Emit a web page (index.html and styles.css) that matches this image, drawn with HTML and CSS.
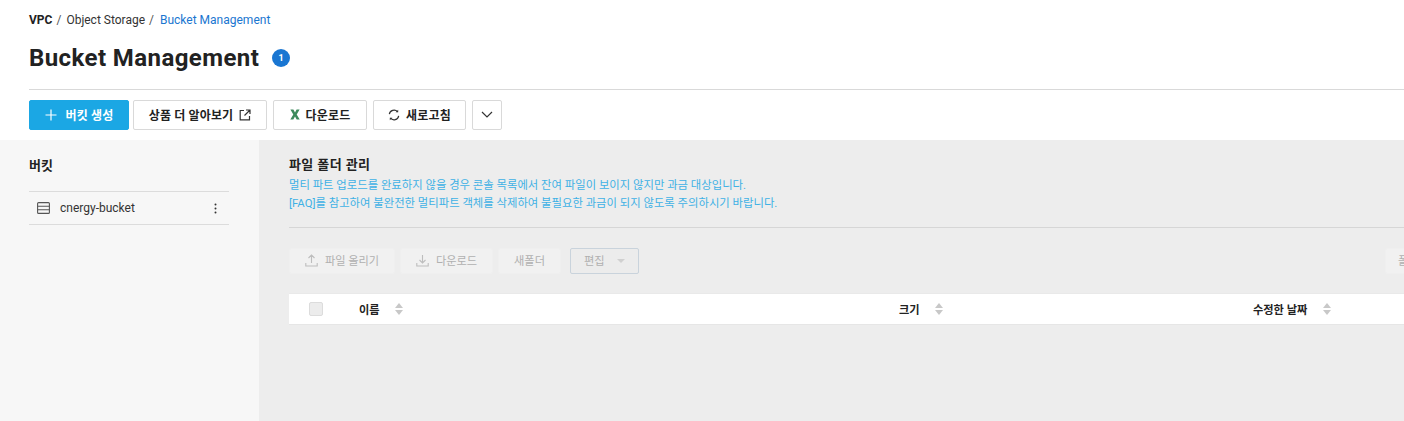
FILE: index.html
```html
<!DOCTYPE html>
<html lang="ko">
<head>
    <meta charset="UTF-8">
    <meta name="viewport" content="width=device-width, initial-scale=1.0">
    <title>Bucket Management</title>
    <link rel="stylesheet" href="styles.css">
</head>
<body>

<div class="page-head">
    <div class="breadcrumb">
        <span class="crumb-root">VPC</span><span class="crumb-sep">/</span>
        <span>Object Storage</span><span class="crumb-sep">/</span>
        <span class="crumb-current">Bucket Management</span>
    </div>
    <div class="title-row">
        <h1>Bucket Management</h1>
        <span class="count-badge">1</span>
    </div>
    <div class="head-line"></div>
    <div class="action-bar">
        <button class="btn btn-primary btn-create">
            <svg width="12" height="12" viewBox="0 0 12 12"><path d="M6 0.5v11M0.5 6h11" stroke="#fff" stroke-width="1.2" fill="none"/></svg>
            버킷 생성
        </button>
        <button class="btn btn-info">
            상품 더 알아보기
            <svg width="12" height="12" viewBox="0 0 12 12" fill="none" stroke="#333" stroke-width="1.2"><path d="M5 1.5H1.2v9.3h9.3V7M7 1h4v4M11 1L5.5 6.5"/></svg>
        </button>
        <button class="btn btn-download">
            <svg width="10" height="11" viewBox="0 0 10 11"><path d="M0.4 0.5h3L5 3.6 6.6 0.5h3L6.7 5.5l3 5h-3L5 7.4 3.3 10.5h-3l3-5z" fill="#3d8a5c"/></svg>
            다운로드
        </button>
        <button class="btn btn-refresh">
            <svg width="12" height="12" viewBox="0 0 12 12" fill="none" stroke="#333" stroke-width="1.2"><path d="M1.3 5.2A4.8 4.8 0 0 1 9.6 2.8M10.7 6.8A4.8 4.8 0 0 1 2.4 9.2"/><path d="M7.6 3.2h2.6V0.8z" fill="#333" stroke="none"/><path d="M4.4 8.8H1.8v2.4z" fill="#333" stroke="none"/></svg>
            새로고침
        </button>
        <button class="btn btn-more">
            <svg width="12" height="7" viewBox="0 0 12 7" fill="none" stroke="#333" stroke-width="1.2"><path d="M1 1l5 5 5-5"/></svg>
        </button>
    </div>
</div>

<div class="content">
    <aside class="sidebar">
        <h2>버킷</h2>
        <div class="bucket-item">
            <svg class="bucket-icon" width="13" height="12" viewBox="0 0 13 12" fill="none" stroke="#555" stroke-width="1.1"><rect x="0.6" y="0.6" width="11.8" height="10.8" rx="1"/><path d="M0.6 4.2h11.8M0.6 7.8h11.8"/></svg>
            <span class="bucket-name">cnergy-bucket</span>
            <svg class="kebab" width="3" height="11" viewBox="0 0 3 11" fill="#333"><circle cx="1.5" cy="1.5" r="1"/><circle cx="1.5" cy="5.5" r="1"/><circle cx="1.5" cy="9.5" r="1"/></svg>
        </div>
    </aside>

    <main class="main">
        <div class="main-inner">
            <h2>파일 폴더 관리</h2>
            <p class="notice">멀티 파트 업로드를 완료하지 않을 경우 콘솔 목록에서 잔여 파일이 보이지 않지만 과금 대상입니다.</p>
            <p class="notice">[FAQ]를 참고하여 불완전한 멀티파트 객체를 삭제하여 불필요한 과금이 되지 않도록 주의하시기 바랍니다.</p>
            <div class="main-line"></div>

            <div class="file-toolbar">
                <button class="file-btn file-upload">
                    <svg width="13" height="13" viewBox="0 0 13 13" fill="none" stroke="#bdbdbd" stroke-width="1.1"><path d="M6.5 9V1M3.5 4l3-3 3 3M0.8 9v3h11.4V9"/></svg>
                    파일 올리기
                </button>
                <button class="file-btn file-download">
                    <svg width="13" height="13" viewBox="0 0 13 13" fill="none" stroke="#bdbdbd" stroke-width="1.1"><path d="M6.5 1v8M3.5 6l3 3 3-3M0.8 9v3h11.4V9"/></svg>
                    다운로드
                </button>
                <button class="file-btn file-folder">새폴더</button>
                <button class="file-edit">편집<span class="caret"></span></button>
                <button class="file-btn file-right">폴더 검색</button>
            </div>

            <div class="table-head">
                <div class="col col-check"><span class="checkbox"></span></div>
                <div class="col col-name">이름<span class="sort"></span></div>
                <div class="col col-size">크기<span class="sort"></span></div>
                <div class="col col-date">수정한 날짜<span class="sort"></span></div>
            </div>
        </div>
    </main>
</div>

</body>
</html>
```

FILE: styles.css
```css
* {
    box-sizing: border-box;
}

html, body {
    height: 100%;
}

body {
    margin: 0;
    font-family: Roboto, "Noto Sans CJK KR", sans-serif;
    color: #222;
    background-color: #fff;
    overflow: hidden;
    display: flex;
    flex-direction: column;
}

button {
    font-family: inherit;
    cursor: pointer;
}

.page-head {
    height: 140px;
    padding: 12px 0 0 29px;
    flex-shrink: 0;
}

.breadcrumb {
    font-size: 12px;
    line-height: 16px;
    color: #333;
    display: flex;
}

.crumb-root {
    font-weight: 700;
    color: #222;
}

.crumb-sep {
    margin: 0 5px 0 4px;
    color: #555;
}

.crumb-sep + span + .crumb-sep {
    margin-right: 6px;
}

.crumb-current {
    color: #1a76d0;
}

.title-row {
    display: flex;
    align-items: center;
    margin-top: 14px;
    height: 32px;
}

h1 {
    margin: 0;
    font-size: 24px;
    font-weight: 700;
    line-height: 32px;
    letter-spacing: 0.42px;
    color: #222;
}

.count-badge {
    width: 18px;
    height: 18px;
    margin-left: 13px;
    border-radius: 50%;
    background-color: #1976d2;
    color: #fff;
    font-size: 9px;
    font-weight: 700;
    display: flex;
    align-items: center;
    justify-content: center;
}

.head-line {
    height: 1px;
    margin-top: 15px;
    background-color: #d9d9d9;
}

.action-bar {
    display: flex;
    margin-top: 10px;
    gap: 6px;
}

.btn {
    height: 30px;
    padding: 0 0 1px;
    border: 1px solid #d9d9d9;
    border-radius: 2px;
    background-color: #fff;
    color: #222;
    font-size: 12px;
    font-weight: 700;
    letter-spacing: 0.15px;
    display: flex;
    align-items: center;
    justify-content: center;
    gap: 6px;
}

.btn-primary {
    background-color: #1ba7e4;
    border-color: #1ba7e4;
    color: #fff;
}

.btn-create {
    width: 100px;
    gap: 9px;
    margin-right: -2px;
}

.btn-info {
    width: 134px;
}

.btn-download {
    width: 94px;
}

.btn-refresh {
    width: 93px;
}

.btn-more {
    width: 30px;
}

.content {
    flex: 1;
    display: flex;
    min-height: 0;
}

.sidebar {
    width: 259px;
    flex-shrink: 0;
    padding: 17px 30px 0 29px;
    background-color: #f7f7f7;
}

.sidebar h2 {
    margin: 0;
    font-size: 13px;
    font-weight: 700;
    line-height: 18px;
    color: #222;
}

.bucket-item {
    height: 34px;
    margin-top: 16px;
    padding: 0 10px 0 8px;
    border-top: 1px solid #dcdcdc;
    border-bottom: 1px solid #dcdcdc;
    display: flex;
    align-items: center;
    font-size: 12px;
    color: #333;
}

.bucket-name {
    margin-left: 10px;
    flex: 1;
}

.kebab {
    margin-right: 2px;
}

.main {
    flex: 1;
    min-width: 0;
    overflow: hidden;
    background-color: #ededed;
    padding: 16px 0 0 30px;
}

.main-inner {
    width: 1200px;
}

.main h2 {
    margin: 0;
    font-size: 13px;
    font-weight: 700;
    line-height: 18px;
    letter-spacing: 0.4px;
    color: #222;
}

.notice {
    margin: 0;
    font-size: 11.35px;
    line-height: 18px;
    color: #3fb1e5;
}

.main h2 + .notice {
    margin-top: 2px;
}

.main-line {
    height: 1px;
    margin-top: 15px;
    background-color: #d6d6d6;
}

.file-toolbar {
    display: flex;
    margin-top: 20px;
    gap: 5px;
}

.file-btn {
    height: 26px;
    padding: 0 0 2px;
    border: 1px solid #efefef;
    border-radius: 2px;
    background-color: #f1f1f1;
    color: #b0b0b0;
    font-size: 11.2px;
    display: flex;
    align-items: center;
    justify-content: center;
    gap: 7px;
}

.file-upload {
    width: 106px;
}

.file-download {
    width: 93px;
}

.file-folder {
    width: 63px;
}

.file-edit {
    width: 69px;
    height: 26px;
    margin-left: 4px;
    padding: 0 0 2px 13px;
    border: 1px solid #c9d3dc;
    border-radius: 2px;
    background-color: #ececec;
    color: #b0b0b0;
    font-size: 11.2px;
    display: flex;
    align-items: center;
}

.caret {
    margin: 2px 0 0 12px;
    border-left: 4px solid transparent;
    border-right: 4px solid transparent;
    border-top: 4px solid #d0d0d0;
}

.file-right {
    width: 104px;
    margin-left: auto;
    padding-left: 12px;
    justify-content: flex-start;
}

.table-head {
    height: 32px;
    margin-top: 19px;
    background-color: #fff;
    border-top: 1px solid #e9e9e9;
    border-bottom: 1px solid #e6e6e6;
    display: flex;
    align-items: center;
    font-size: 11.2px;
    font-weight: 700;
    color: #222;
}

.col {
    display: flex;
    align-items: center;
}

.col-check {
    width: 70px;
    padding-left: 20px;
}

.col-name {
    width: 540px;
}

.col-size {
    width: 354px;
}

.checkbox {
    width: 14px;
    height: 14px;
    border: 1px solid #dcdcdc;
    border-radius: 2px;
    background-color: #ececec;
}

.sort {
    margin-left: 15px;
    width: 8px;
    height: 12px;
    position: relative;
}

.col-date .sort {
    margin-left: 16px;
}

.sort::before,
.sort::after {
    content: "";
    position: absolute;
    left: 0;
    border-left: 4px solid transparent;
    border-right: 4px solid transparent;
}

.sort::before {
    top: 0;
    border-bottom: 5px solid #c8c8c8;
}

.sort::after {
    bottom: 0;
    border-top: 5px solid #c8c8c8;
}
```
